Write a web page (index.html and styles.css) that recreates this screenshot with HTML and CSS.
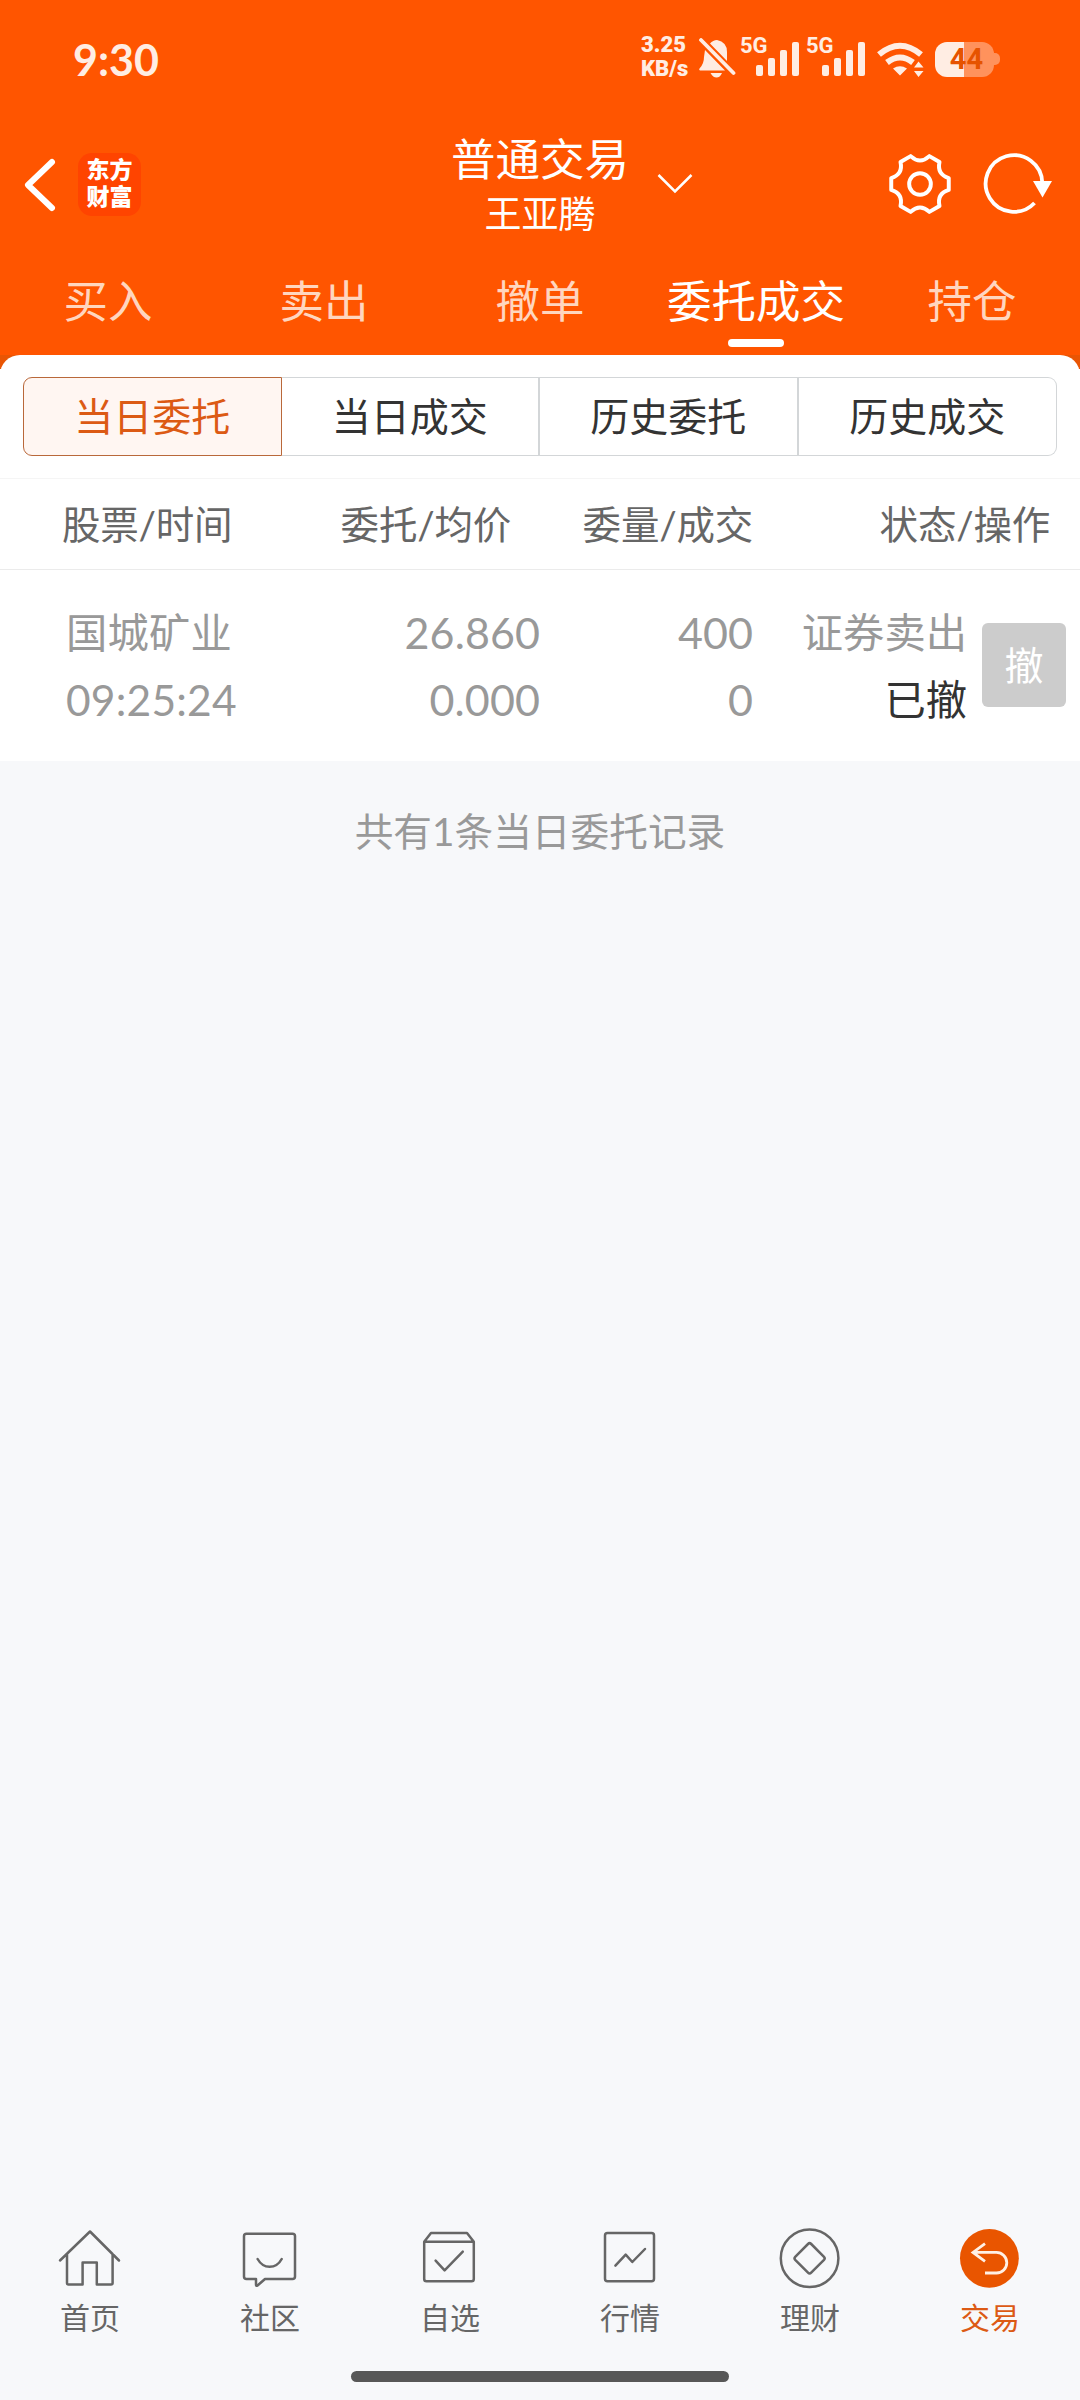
FILE: index.html
```html
<!doctype html>
<html lang="zh-CN">
<head>
<meta charset="UTF-8">
<title>普通交易</title>
<link rel="stylesheet" href="styles.css">
</head>
<body>
<div class="header">
  <div class="status_bar">
    <div class="clock">9:30</div>
    <div class="status_icons">
      <div class="speed">3.25<br>KB/s</div>
      <svg class="bell" width="38" height="40" viewBox="0 0 38 40">
        <path d="M7 12 L27 32.500 H2 Q0.500 32 1.500 30.500 Q6 26 6 19Z M12 5.500 Q15 2 19 2 Q29 4 29 14 V23Z M12.500 35 H24 Q22 39.500 18.500 39.500 Q15 39.500 12.500 35Z" fill="#ffede3"/>
        <path d="M3 2 L35.500 35" stroke="#ffede3" stroke-width="3.800" stroke-linecap="round"/>
      </svg>
      <div class="signal">
        <span>5G</span>
        <svg width="43" height="34" viewBox="0 0 43 34" fill="#ffede3"><rect x="0" y="23" width="7" height="11" rx="2"/><rect x="12" y="16" width="7" height="18" rx="2"/><rect x="24" y="8" width="7" height="26" rx="2"/><rect x="36" y="0" width="7" height="34" rx="2"/></svg>
      </div>
      <div class="signal">
        <span>5G</span>
        <svg width="43" height="34" viewBox="0 0 43 34" fill="#ffede3"><rect x="0" y="23" width="7" height="11" rx="2"/><rect x="12" y="16" width="7" height="18" rx="2"/><rect x="24" y="8" width="7" height="26" rx="2"/><rect x="36" y="0" width="7" height="34" rx="2"/></svg>
      </div>
      <svg class="wifi" width="48" height="36" viewBox="0 0 48 36">
        <path d="M3 12.500 Q24 -5 45 12.500" fill="none" stroke="#ffede3" stroke-width="6"/>
        <path d="M11 20.500 Q24 10.500 37 20.500" fill="none" stroke="#ffede3" stroke-width="6"/>
        <path d="M17 26.500 Q24 22 31 26.500 L24 33.500Z M42.500 19.500 L47.500 25.500 H38Z M38 29 H47.500 L42.500 35Z" fill="#ffede3"/>
      </svg>
      <div class="battery"><span>44</span></div>
    </div>
  </div>

  <div class="title_bar">
    <div class="title_left">
      <svg width="36" height="56" viewBox="0 0 36 56"><path d="M30 5 L6 28 L30 51" fill="none" stroke="#fff" stroke-width="6" stroke-linecap="round" stroke-linejoin="round"/></svg>
      <div class="logo">
        <div>东方</div>
        <div>财富</div>
      </div>
    </div>
    <div class="title">
      <div class="title_name">普通交易</div>
      <div class="user_name">王亚腾</div>
    </div>
    <div class="title_right">
      <svg class="arrow_down" width="36" height="22" viewBox="0 0 36 22"><path d="M1.500 2 L18 18.500 L34.500 2" fill="none" stroke="#fff" stroke-width="2.500"/></svg>
      <svg class="gear" width="66" height="66" viewBox="-33.500 -33.500 67 67" fill="none" stroke="#fff" stroke-width="4" stroke-linejoin="round">
        <path d="M-9.500 -28.300 Q0 -19.500 9.500 -28.300 L19.800 -22.300 Q17 -9.800 29.200 -6 V6 Q17 9.800 19.800 22.300 L9.500 28.300 Q0 19.500 -9.500 28.300 L-19.800 22.300 Q-17 9.800 -29.200 6 V-6 Q-17 -9.800 -19.800 -22.300Z"/>
        <circle cx="0" cy="0" r="11"/>
      </svg>
      <svg class="refresh" width="72" height="66" viewBox="-33 -33 72 66">
        <path d="M20.500 19 A28.300 28.300 0 1 1 28.300 -1" fill="none" stroke="#fff" stroke-width="3.800"/>
        <path d="M19 -3 H38 L28.500 13.500Z" fill="#fff"/>
      </svg>
    </div>
  </div>

  <div class="tabs">
    <div class="tab">买入</div>
    <div class="tab">卖出</div>
    <div class="tab">撤单</div>
    <div class="tab tab_on">委托成交</div>
    <div class="tab">持仓</div>
  </div>
</div>

<div class="sheet_wrap">
  <div class="sheet">
    <div class="segment">
      <div class="seg seg_on">当日委托</div>
      <div class="seg">当日成交</div>
      <div class="seg">历史委托</div>
      <div class="seg">历史成交</div>
    </div>
    <div class="list_head">
      <div class="head_1">股票/时间</div>
      <div class="head_2">委托/均价</div>
      <div class="head_3">委量/成交</div>
      <div class="head_4">状态/操作</div>
    </div>
    <div class="list_row">
      <div class="cell_1">国城矿业<br><span class="time">09:25:24</span></div>
      <div class="cell_2">26.860<br>0.000</div>
      <div class="cell_3">400<br>0</div>
      <div class="cell_4">证券卖出<br><span class="done">已撤</span></div>
      <div class="cancel_btn">撤</div>
    </div>
  </div>
</div>

<div class="total">共有1条当日委托记录</div>

<div class="nav">
  <div class="nav_item">
    <svg width="64" height="64" viewBox="0 0 64 64"><path d="M2 34.500 L32 5.500 L61 34.500 M9 28 V57 Q9 58.500 10.500 58.500 H24.600 V36.500 H38.800 V58.500 H53 Q54.600 58.500 54.600 57 V28"/></svg>
    首页
  </div>
  <div class="nav_item">
    <svg width="64" height="64" viewBox="0 0 64 64"><path d="M8.500 7.700 H54.500 Q57 7.700 57 10 V50.500 Q57 53 54.500 53 H27 L19.500 59.500 Q18 60.500 18 58.500 V53 H8.500 Q6 53 6 50.500 V10 Q6 7.700 8.500 7.700Z M19.600 33 Q24 40.800 31.600 40.800 Q39.500 40.800 43.700 33"/></svg>
    社区
  </div>
  <div class="nav_item">
    <svg width="64" height="64" viewBox="0 0 64 64"><path d="M6.200 15.700 L13 7 H49 L55.800 15.700 V53 Q55.800 55.300 53.500 55.300 H8.500 Q6.200 55.300 6.200 53Z M6.200 15.700 H55.800 M17.600 34.700 L26.600 44.300 L44.800 25.700"/></svg>
    自选
  </div>
  <div class="nav_item">
    <svg width="64" height="64" viewBox="0 0 64 64"><rect x="7" y="7" width="49" height="48.300" rx="2.500"/><path d="M17.400 39.700 L27.700 28.700 L34.300 36 L47 23"/></svg>
    行情
  </div>
  <div class="nav_item">
    <svg width="64" height="64" viewBox="0 0 64 64"><circle cx="31.600" cy="32.300" r="28.800"/><path d="M30 18 Q31.600 16.400 33.200 18 L46 30.800 Q47.400 32.300 46 33.800 L33.200 46.600 Q31.600 48.200 30 46.600 L17.200 33.800 Q15.800 32.300 17.200 30.800Z"/></svg>
    理财
  </div>
  <div class="nav_item nav_on">
    <svg width="64" height="64" viewBox="0 0 64 64"><circle class="nav_fill" cx="31.400" cy="32.300" r="29.400"/><path class="nav_arrow" d="M27 17.700 L15 26.400 L27 35.300 M15 26.400 H38.500 A10.300 10.300 0 0 1 38.500 47 H27"/></svg>
    交易
  </div>
</div>
<div class="home_bar"></div>
</body>
</html>
```
FILE: styles.css
```css
* {
    box-sizing: border-box;
}
body {
    margin: 0;
    height: 2400px;
    display: flex;
    flex-direction: column;
    background-color: #f7f8fa;
    font-family: Lato, "Noto Sans CJK SC", sans-serif;
    color: #333333;
}
svg {
    display: block;
}
.header {
    height: 355px;
    background-color: #ff5500;
    color: #ffffff;
}
.status_bar {
    height: 118px;
    padding: 0 80px 0 73px;
    display: flex;
    justify-content: space-between;
    color: #ffede3;
}
.clock {
    font-size: 43px;
    font-weight: bold;
    line-height: 120px;
}
.status_icons {
    display: flex;
    padding-top: 33px;
}
.speed {
    width: 57px;
    font-family: Roboto, sans-serif;
    font-size: 22px;
    font-weight: 900;
    line-height: 24px;
}
.bell {
    margin-top: 5px;
}
.signal {
    width: 66px;
    display: flex;
    padding-top: 9px;
}
.signal:nth-of-type(2) {
    margin-left: 5px;
}
.signal span {
    width: 15px;
    margin-top: -8px;
    margin-left: -1px;
    margin-right: 1px;
    font-family: Roboto, sans-serif;
    font-size: 22px;
    font-weight: bold;
    line-height: 24px;
    white-space: nowrap;
}
.wifi {
    margin-top: 9px;
    margin-left: 3px;
}
.battery {
    width: 59px;
    height: 35px;
    margin-top: 9px;
    margin-left: 11px;
    margin-right: 6px;
    border-radius: 12px;
    background: linear-gradient(to right, #ffede3 29px, #ff925c 29px);
    color: #e65300;
    font-family: Roboto, sans-serif;
    font-size: 29px;
    font-weight: bold;
    line-height: 35px;
    text-align: center;
    position: relative;
}
.battery span {
    margin-left: 4px;
}
.battery::after {
    content: "";
    position: absolute;
    left: 59px;
    top: 11px;
    width: 6px;
    height: 12px;
    border-radius: 0 5px 5px 0;
    background-color: #ff925c;
}
.title_bar {
    height: 129px;
    padding: 13px 0 0 0;
    display: grid;
    grid-template-columns: 1fr 200px 1fr;
}
.title_left {
    display: flex;
    padding-left: 22px;
}
.title_left svg {
    margin-top: 26px;
}
.logo {
    width: 63px;
    height: 63px;
    margin: 22px 0 0 20px;
    padding-top: 2px;
    border-radius: 14px;
    background-color: #ff4400;
    font-family: "Noto Sans CJK SC", sans-serif;
    font-size: 23px;
    font-weight: 900;
    line-height: 27px;
    text-align: center;
}
.title {
    text-align: center;
}
.title_name {
    font-size: 44.500px;
    line-height: 56px;
}
.user_name {
    font-size: 37px;
    line-height: 54px;
}
.title_right {
    display: flex;
}
.arrow_down {
    margin: 42px 0 0 17px;
}
.gear {
    margin: 20px 0 0 194px;
}
.refresh {
    margin: 20px 0 0 28px;
}
.tabs {
    display: grid;
    grid-template-columns: repeat(5, 1fr);
}
.tab {
    height: 108px;
    color: #ffd6bf;
    font-size: 44.500px;
    line-height: 108px;
    text-align: center;
    white-space: nowrap;
}
.tab_on {
    color: #ffffff;
    position: relative;
}
.tab_on::after {
    content: "";
    position: absolute;
    left: 80px;
    top: 92px;
    width: 56px;
    height: 8px;
    border-radius: 4px;
    background-color: #ffffff;
}
.sheet_wrap {
    background: linear-gradient(#e95504 14px, #ffffff 14px);
}
.sheet {
    height: 406px;
    padding-top: 22px;
    border-radius: 20px 20px 0 0;
    background-color: #ffffff;
}
.segment {
    height: 79px;
    margin: 0 23px;
    display: grid;
    grid-template-columns: repeat(4, 1fr);
}
.seg {
    border: 1px solid #d3d6d8;
    border-left-width: 0;
    font-size: 39px;
    line-height: 77px;
    text-align: center;
}
.seg:nth-child(2),
.seg:nth-child(3) {
    border-right-width: 2px;
}
.seg:last-child {
    border-radius: 0 9px 9px 0;
}
.seg_on {
    border: 1px solid #b9683a;
    border-radius: 9px 0 0 9px;
    background-color: #fff6f2;
    color: #dc5a14;
}
.list_head {
    height: 92px;
    margin-top: 22px;
    border-top: 1px solid #f5f5f5;
    border-bottom: 1px solid #ebebeb;
    display: grid;
    grid-template-columns: 511px 242px 297px;
    color: #666666;
    font-size: 38.500px;
    line-height: 91px;
    letter-spacing: -0.200px;
    text-align: right;
}
.head_1 {
    grid-area: 1 / 1;
    padding-left: 62px;
    text-align: left;
}
.head_2 {
    grid-area: 1 / 1;
}
.list_row {
    height: 191px;
    padding-top: 29px;
    display: grid;
    grid-template-columns: 300px 240px 213px 214px 84px;
    color: #999999;
    font-size: 41.300px;
    line-height: 67px;
    text-align: right;
}
.cell_1 {
    padding-left: 66px;
    text-align: left;
    letter-spacing: 0.2px;
}
.time {
    font-size: 42.500px;
}
.cell_2,
.cell_3 {
    font-size: 43px;
    letter-spacing: 0.1px;
}
.done {
    color: #333333;
}
.cancel_btn {
    width: 84px;
    height: 84px;
    margin: 24px 0 0 15px;
    border-radius: 6px;
    background-color: #cccccc;
    color: #ffffff;
    font-size: 39px;
    line-height: 84px;
    text-align: center;
}
.total {
    padding-top: 40px;
    color: #999999;
    font-size: 38.700px;
    line-height: 60px;
    text-align: center;
}
.nav {
    margin-top: auto;
    height: 145px;
    display: grid;
    grid-template-columns: repeat(6, 1fr);
}
.nav_item {
    display: flex;
    flex-direction: column;
    align-items: center;
    color: #666666;
    font-size: 30px;
    line-height: 54px;
}
.nav_item svg {
    fill: none;
    stroke: #666666;
    stroke-width: 2.500;
    stroke-linecap: round;
    stroke-linejoin: round;
}
.nav_on {
    color: #dc5a14;
}
.nav_item .nav_fill {
    fill: #e95500;
    stroke: none;
}
.nav_item .nav_arrow {
    stroke: #fff0e5;
    stroke-width: 2.800;
    stroke-linecap: butt;
    stroke-linejoin: miter;
}
.home_bar {
    width: 378px;
    height: 11px;
    margin: 0 auto 18px;
    border-radius: 6px;
    background-color: #575757;
}
```
